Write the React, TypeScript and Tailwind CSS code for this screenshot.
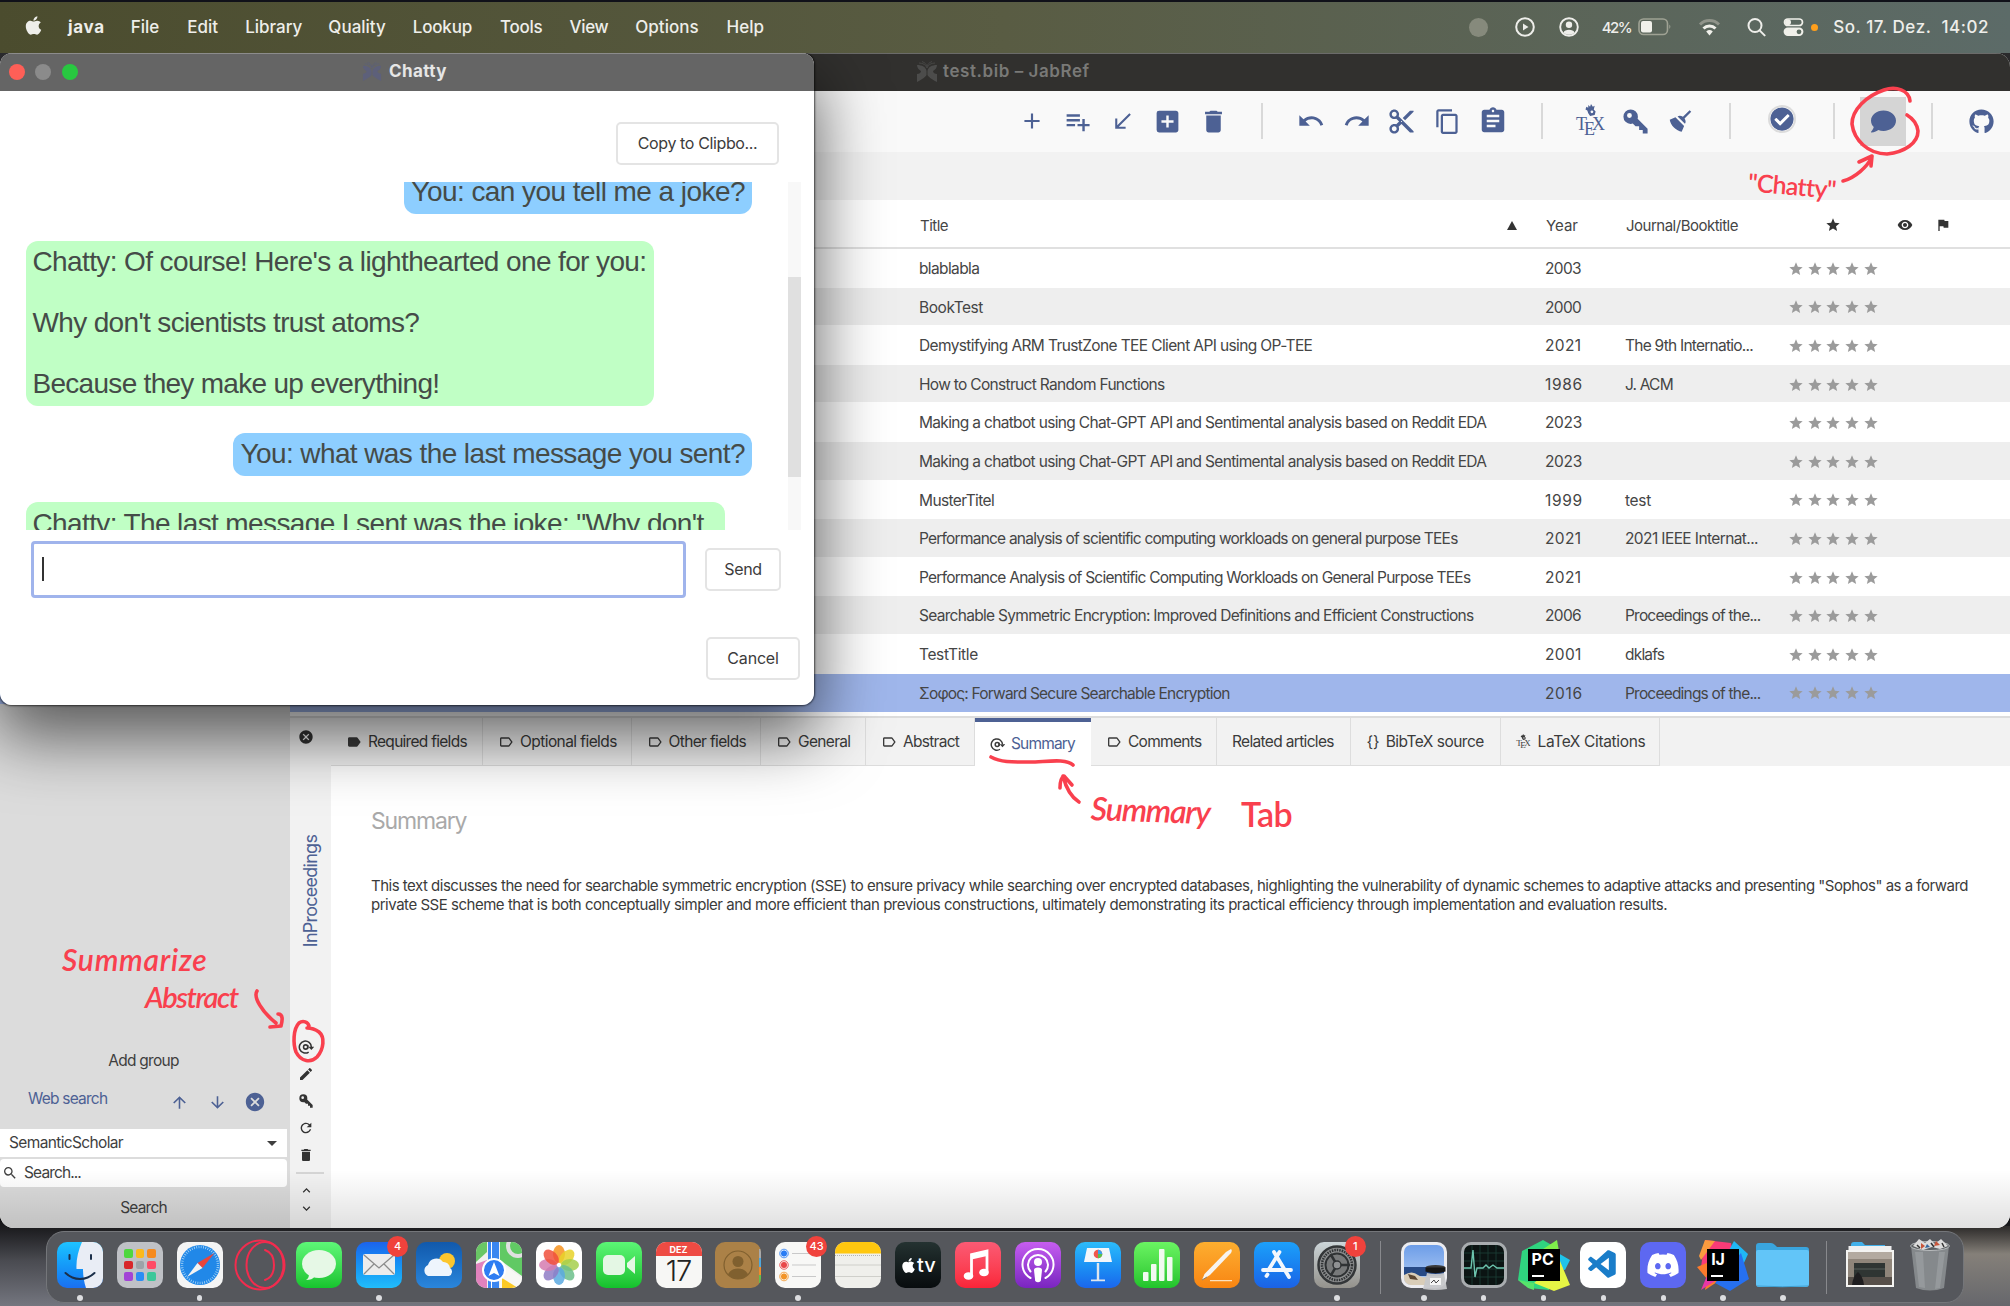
import React, { useLayoutEffect, useRef, useState } from "react";
import {
  MdAdd, MdPlaylistAdd, MdSouthWest, MdAddBox, MdDelete, MdUndo, MdRedo, MdContentCut, MdContentCopy,
  MdAssignment, MdLabel, MdLabelOutline, MdStar, MdRemoveRedEye, MdFlag, MdEdit, MdRefresh, MdExpandLess,
  MdExpandMore, MdArrowUpward, MdArrowDownward, MdCancel, MdSearch, MdArrowDropDown,
} from "react-icons/md";
import { FaApple, FaComment, FaDiscord, FaGithub, FaCheckCircle } from "react-icons/fa";
import { VscVscode } from "react-icons/vsc";

/** Text tracked so that it takes exactly `w` pixels. */
function Fit({ w, children, className = "" }: { w: number; children: string; className?: string }) {
  const ref = useRef<HTMLSpanElement>(null);
  const [spacing, setSpacing] = useState(0);
  useLayoutEffect(() => {
    if (ref.current) setSpacing((w - ref.current.offsetWidth) / Math.max(1, children.length - 1));
  }, [w, children]);
  return (
    <span ref={ref} className={`inline-block whitespace-pre shrink-0 ${className}`} style={{ letterSpacing: spacing }}>
      {children}
    </span>
  );
}

/* ---------- small icons ---------- */

const KeyIcon = ({ size }: { size: number }) => (
  <svg width={size} height={size} viewBox="0 0 24 24" fill="currentColor">
    <path d="M22,18V22H18V19H15V16H12L9.74,13.74C9.19,13.91 8.61,14 8,14A6,6 0 0,1 2,8A6,6 0 0,1 8,2A6,6 0 0,1 14,8C14,8.61 13.91,9.19 13.74,9.74L22,18M7,5A2,2 0 0,0 5,7A2,2 0 0,0 7,9A2,2 0 0,0 9,7A2,2 0 0,0 7,5Z" />
  </svg>
);
const BroomIcon = ({ size }: { size: number }) => (
  <svg width={size} height={size} viewBox="0 0 24 24" fill="currentColor">
    <path d="M19.36,2.72L20.78,4.14L15.06,9.85C16.13,11.39 16.28,13.24 15.38,14.44L9.06,8.12C10.26,7.22 12.11,7.37 13.65,8.44L19.36,2.72M5.93,17.57C3.92,15.56 2.69,13.16 2.35,10.92L7.23,8.83L14.67,16.27L12.58,21.15C10.34,20.81 7.94,19.58 5.93,17.57Z" />
  </svg>
);
const AtIcon = ({ size }: { size: number }) => (
  <svg width={size} height={size} viewBox="0 0 24 24" fill="none" stroke="currentColor" strokeWidth="2.3">
    <path d="M16 19.6A9 9 0 1 1 20 12" />
    <path d="M15.5 11.5h9l-4.5 5z" fill="currentColor" stroke="none" />
    <circle cx="11.5" cy="12" r="3.2" />
    <path d="M14.5 9v5.5" />
  </svg>
);
const TexIcon = ({ small = false }: { small?: boolean }) => (
  <span className={`relative flex flex-col items-center font-['Liberation_Serif'] leading-none ${small ? "w-[16px] h-[16px]" : "w-[29px] h-[34px]"}`}>
    <svg className={small ? "w-[7px] h-[7px]" : "w-[12px] h-[13px]"} viewBox="0 0 12 13" fill="currentColor">
      <path d="M1 3l2 1 0-3 2 2 1-3 2 3 2-1-1 4 2 2-1 4-5 1-2-3-1-3-2-1z" />
      <circle cx="7" cy="8.5" r="1.5" fill="#f9f9f9" />
    </svg>
    <span className={`flex leading-none ${small ? "text-[9px] -mt-px" : "text-[18px] -mt-[1px]"}`}>
      <span>T</span>
      <span className={small ? "-ml-[1.5px] mt-[2px]" : "-ml-[3px] mt-[5px]"}>E</span>
      <span className={small ? "-ml-[1.5px]" : "-ml-[3px]"}>X</span>
    </span>
  </span>
);
const JabRefIcon = ({ className }: { className: string }) => (
  <svg className={className} viewBox="0 0 22 22" fill="currentColor">
    <path d="M1 4c5 0 9 2 9.500 6v4c-1 2-4 4-9.500 7V13c2 0 4-1 4-3C3 9 1 7 1 4zM21 4c-5 0-9 2-9.500 6v4c1 2 4 4 9.500 7V13c-2 0-4-1-4-3 2-1 4-3 4-6z" />
    <path d="M3 2c4 0 7 2 8 5 1-3 4-5 8-5M6 .5c3 1 4.500 3 5 5 .5-2 2-4 5-5" fill="none" stroke="currentColor" strokeWidth=".8" />
  </svg>
);

/* ---------- menu bar ---------- */

const MENUS: [string, number, string][] = [
  ["java", 36, "ml-[68px] font-bold"], ["File", 29, "ml-[26px]"], ["Edit", 31, "ml-[28px]"],
  ["Library", 57, "ml-[27px]"], ["Quality", 57, "ml-[26px]"], ["Lookup", 59, "ml-[27px]"],
  ["Tools", 43, "ml-[28px]"], ["View", 39, "ml-[27px]"], ["Options", 63, "ml-[27px]"], ["Help", 37, "ml-[28px]"],
];

function MenuBar() {
  return (
    <div className="relative flex h-[53px] shrink-0 items-center border-t-2 border-[#101119] bg-linear-to-r from-[#4b4c2e] via-[#595c43] to-[#5c6b68] pb-[1px] text-[17px] font-medium text-[#eeeeea]">
      <FaApple size={21} className="absolute left-[22.500px] top-[13px]" />
      {MENUS.map(([t, w, c]) => (
        <Fit key={t} w={w} className={c}>{t}</Fit>
      ))}
      <div className="ml-auto flex items-center">
        <span className="size-[19px] rounded-full bg-[#868a7c]" />
        <svg className="ml-[27px]" width="20" height="20" viewBox="0 0 20 20" fill="none" stroke="currentColor" strokeWidth="2">
          <circle cx="10" cy="10" r="8.800" /><path d="M8 6.500l5.500 3.500-5.500 3.500z" fill="currentColor" stroke="none" />
        </svg>
        <svg className="ml-[24px]" width="20" height="20" viewBox="0 0 20 20" fill="none" stroke="currentColor" strokeWidth="1.900">
          <circle cx="10" cy="10" r="8.800" /><circle cx="10" cy="7.800" r="3.200" fill="currentColor" stroke="none" />
          <path d="M4.500 15.500c1-3.800 10-3.800 11 0-3 3-8 3-11 0z" fill="currentColor" stroke="none" />
        </svg>
        <Fit w={31} className="ml-[23px] text-[15px]">42%</Fit>
        <svg className="ml-[7px]" width="34" height="18" viewBox="0 0 34 18">
          <rect x="1" y="1" width="28.500" height="15.500" rx="4.500" fill="none" stroke="#9fa294" strokeWidth="1.600" />
          <rect x="3" y="3" width="11" height="11.500" rx="2" fill="#f0f0ea" />
          <path d="M31.300 6.500q2.200 2.200 0 4.500z" fill="#9fa294" />
        </svg>
        <svg className="ml-[26px]" width="23" height="18" viewBox="0 0 22 18" fill="none" strokeWidth="3">
          <path d="M1.500 6.500a13.500 13.500 0 0 1 19 0" stroke="#90948a" />
          <path d="M5 10.500a8.500 8.500 0 0 1 12 0" stroke="#f0f0ea" />
          <path d="M11 17.500l-3.300-4a5 5 0 0 1 6.600 0z" fill="#f0f0ea" />
        </svg>
        <svg className="ml-[26px]" width="19" height="20" viewBox="0 0 19 20" fill="none" stroke="currentColor" strokeWidth="2">
          <circle cx="8" cy="8.500" r="6.500" /><path d="M12.600 13.400l5 5" strokeLinecap="round" />
        </svg>
        <svg className="ml-[17px]" width="21" height="20" viewBox="0 0 21 20">
          <rect x="1.500" y="2" width="18" height="6.500" rx="3.300" fill="none" stroke="#f0f0ea" strokeWidth="1.700" />
          <circle cx="5" cy="5.200" r="3" fill="#f0f0ea" />
          <rect x="0.600" y="10.500" width="19.800" height="8.500" rx="4.200" fill="#f0f0ea" />
          <circle cx="16" cy="14.800" r="2.400" fill="#5c6b60" />
        </svg>
        <span className="ml-[7px] size-[7px] rounded-full bg-[#ff9f1c]" />
        <Fit w={155} className="ml-[15px] mr-[21px]">{"So. 17. Dez.  14:02"}</Fit>
      </div>
    </div>
  );
}

/* ---------- toolbar ---------- */

const Cell = ({ children, className = "" }: { children: React.ReactNode; className?: string }) => (
  <div className={`flex w-[45.400px] h-full items-center justify-center ${className}`}>{children}</div>
);
const Separator = () => (
  <div className="flex w-[52.500px] items-center justify-center"><span className="h-[36px] w-[2px] bg-[#d9d9d9]" /></div>
);

function Toolbar() {
  return (
    <div className="flex h-[61px] items-center bg-[#f9f9f9] pb-[1px] pl-[1009px] text-[#4d6194]">
      <Cell><MdAdd size={26} /></Cell>
      <Cell><MdPlaylistAdd size={29} /></Cell>
      <Cell><MdSouthWest size={25} /></Cell>
      <Cell><MdAddBox size={29} /></Cell>
      <Cell><MdDelete size={29} /></Cell>
      <Separator />
      <Cell><MdUndo size={28} /></Cell>
      <Cell><MdRedo size={28} /></Cell>
      <Cell><MdContentCut size={29} /></Cell>
      <Cell><MdContentCopy size={27} /></Cell>
      <Cell><MdAssignment size={30} /></Cell>
      <Separator />
      <Cell><TexIcon /></Cell>
      <Cell><KeyIcon size={29} /></Cell>
      <Cell><BroomIcon size={28} /></Cell>
      <Separator />
      <div className="mb-[5px] flex w-[51px] justify-center">
        <span className="rounded-full bg-[#dcdcdc] p-[2px]"><FaCheckCircle size={24} className="rounded-full bg-white" /></span>
      </div>
      <Separator />
      <div className="flex h-[49px] w-[46px] items-center justify-center bg-[#d5d5d5]"><FaComment size={25} /></div>
      <Separator />
      <Cell><FaGithub size={25} /></Cell>
    </div>
  );
}

/* ---------- table ---------- */

const ROWS: [string, number, string, string, number][] = [
  ["blablabla", 61, "2003", "", 0],
  ["BookTest", 64, "2000", "", 0],
  ["Demystifying ARM TrustZone TEE Client API using OP-TEE", 394, "2021", "The 9th Internatio...", 129],
  ["How to Construct Random Functions", 246, "1986", "J. ACM", 49],
  ["Making a chatbot using Chat-GPT API and Sentimental analysis based on Reddit EDA", 568, "2023", "", 0],
  ["Making a chatbot using Chat-GPT API and Sentimental analysis based on Reddit EDA", 568, "2023", "", 0],
  ["MusterTitel", 76, "1999", "test", 26],
  ["Performance analysis of scientific computing workloads on general purpose TEEs", 539, "2021", "2021 IEEE Internat...", 134],
  ["Performance Analysis of Scientific Computing Workloads on General Purpose TEEs", 552, "2021", "", 0],
  ["Searchable Symmetric Encryption: Improved Definitions and Efficient Constructions", 555, "2006", "Proceedings of the...", 136],
  ["TestTitle", 59, "2001", "dklafs", 40],
  ["Σοφος: Forward Secure Searchable Encryption", 311, "2016", "Proceedings of the...", 136],
];

function Table() {
  return (
    <div className="bg-white text-[15.500px] text-[#454545]">
      <div className="flex h-[49px] items-center border-b-2 border-[#e0e0e0] pl-[920px] pt-[3px] text-[15px]">
        <div className="w-[587px]"><Fit w={29}>Title</Fit></div>
        <svg width="10" height="9" viewBox="0 0 10 9" className="shrink-0 text-[#333]"><path d="M5 0l5 9H0z" fill="currentColor" /></svg>
        <Fit w={32} className="ml-[29px]">Year</Fit>
        <Fit w={113} className="ml-[48px]">Journal/Booktitle</Fit>
        <MdStar size={16} className="ml-[87px] text-[#333]" />
        <MdRemoveRedEye size={16} className="ml-[56px] text-[#333]" />
        <MdFlag size={16} className="ml-[22px] text-[#333]" />
      </div>
      {ROWS.map(([title, tw, year, journal, jw], i) => (
        <div
          key={i}
          className={`flex h-[38.600px] items-center pl-[919px] ${i === 11 ? "bg-[#9fb6eb] pt-[1px]" : i % 2 ? "border-b-[1px] border-white bg-[#eeeeee] pt-[2px]" : "bg-white pt-[1px]"}`}
        >
          <div className="w-[626px]"><Fit w={tw}>{title}</Fit></div>
          <div className="w-[80px]"><Fit w={year === "2021" || year === "2001" ? 36 : 37}>{year}</Fit></div>
          <div className="w-[163px]">{journal && <Fit w={jw}>{journal}</Fit>}</div>
          <div className="flex gap-[2.700px] text-[#9b9b9b]">
            {[0, 1, 2, 3, 4].map((s) => <MdStar key={s} size={16} />)}
          </div>
        </div>
      ))}
    </div>
  );
}

/* ---------- lower part ---------- */

function SidePane() {
  return (
    <div className="flex w-[290px] shrink-0 flex-col bg-[#dcdcdc] text-[15.500px] text-[#3f3f3f]">
      <div className="mt-[338px] flex h-[37px] items-center justify-center pr-[3px]"><Fit w={71}>Add group</Fit></div>
      <div className="mt-[1px] flex h-[46px] items-center pl-[28px] text-[#4d6194]">
        <Fit w={80} className="mb-[8px] mr-[63px]">Web search</Fit>
        <MdArrowUpward size={19} />
        <MdArrowDownward size={19} className="ml-[19px]" />
        <MdCancel size={22} className="ml-[17px]" />
      </div>
      <div className="mr-[3px] mt-[4px] flex h-[28px] items-center justify-between bg-white pl-[9px] pr-[3px]">
        <Fit w={115}>SemanticScholar</Fit>
        <MdArrowDropDown size={24} />
      </div>
      <div className="mr-[3px] mt-[2.500px] flex h-[28px] items-center rounded-sm bg-white pl-[2px]">
        <MdSearch size={16} />
        <Fit w={58} className="ml-[6px]">Search...</Fit>
      </div>
      <div className="flex h-[42px] items-center justify-center pr-[3px]"><Fit w={47}>Search</Fit></div>
    </div>
  );
}

function EntryRail() {
  return (
    <div className="flex w-[41px] shrink-0 flex-col items-center bg-[#f2f2f2] pr-[9px] text-[#333]">
      <MdCancel size={16} className="mt-[10.500px]" />
      <div className="ml-[10px] mt-[89px] flex h-[114px] w-[20px] items-center justify-center text-[18px] text-[#4d6194]">
        <span className="-rotate-90"><Fit w={113}>InProceedings</Fit></span>
      </div>
      <div className="mt-[91px] flex flex-col items-center gap-[11.200px]">
        <AtIcon size={16} />
        <MdEdit size={16} />
        <KeyIcon size={16} />
        <MdRefresh size={16} />
        <MdDelete size={16} />
      </div>
      <div className="ml-[8px] mt-[9px] h-[2px] w-[28px] shrink-0 bg-[#d5d5d5]" />
      <MdExpandLess size={15} className="mt-[9px]" />
      <MdExpandMore size={15} className="mt-[3px]" />
    </div>
  );
}

const Lbl = () => <MdLabelOutline size={16} className="shrink-0" />;
const TABS: [string, number, string, React.ReactNode][] = [
  ["Required fields", 100, "w-[152px] pl-[15px]", <MdLabel size={16} className="shrink-0" />],
  ["Optional fields", 97, "w-[148.500px] pl-[15px]", <Lbl />],
  ["Other fields", 78, "w-[129.500px] pl-[15px]", <Lbl />],
  ["General", 53, "w-[105px] pl-[15px]", <Lbl />],
  ["Abstract", 57, "w-[109px] pl-[15px]", <Lbl />],
  ["Summary", 65, "w-[116px] pl-[15px]", <AtIcon size={15} />],
  ["Comments", 74, "w-[126px] pl-[15px]", <Lbl />],
  ["Related articles", 102, "w-[133.500px] pl-[15px]", null],
  ["BibTeX source", 99, "w-[150px] pl-[16px]", <Fit w={13}>{"{}"}</Fit>],
  ["LaTeX Citations", 108, "w-[159px] pl-[15px]", <TexIcon small />],
];

function Editor() {
  return (
    <div className="flex min-w-0 flex-1 flex-col bg-white text-[#3b3b3b]">
      <div className="flex h-[48px] bg-[#f2f2f2] text-[15.500px]">
        {TABS.map(([t, w, c, icon]) => (
          <div
            key={t}
            className={`flex shrink-0 items-center gap-[6px] ${c} ${t === "Summary" ? "border-t-4 border-[#4d6194] bg-white" : "border-b border-r border-[#dddddd] pt-[1px]"}`}
          >
            {icon}
            <Fit w={w} className={t === "Summary" ? "text-[#4d6194]" : ""}>{t}</Fit>
          </div>
        ))}
      </div>
      <Fit w={97} className="ml-[40px] mt-[41px] self-start text-[23px] leading-[28px] text-[#a9a9a9]">Summary</Fit>
      <div className="ml-[40px] mt-[42px] flex flex-col text-[15px] leading-[18.700px]">
        <Fit w={1598} className="self-start">{"This text discusses the need for searchable symmetric encryption (SSE) to ensure privacy while searching over encrypted databases, highlighting the vulnerability of dynamic schemes to adaptive attacks and presenting \"Sophos\" as a forward"}</Fit>
        <Fit w={1297} className="self-start">private SSE scheme that is both conceptually simpler and more efficient than previous constructions, ultimately demonstrating its practical efficiency through implementation and evaluation results.</Fit>
      </div>
    </div>
  );
}

/* ---------- chat dialog ---------- */

const Btn = ({ w, className, children }: { w: number; className: string; children: string }) => (
  <button className={`flex h-[43px] shrink-0 items-center justify-center rounded-[5px] border-2 border-[#e4e4e4] bg-white text-[16px] text-[#3c3c3c] ${className}`}>
    <Fit w={w}>{children}</Fit>
  </button>
);

function ChatDialog() {
  return (
    <div className="absolute left-0 top-[53px] flex h-[652px] w-[814px] flex-col overflow-hidden rounded-[12px] bg-white">
      <div className="relative flex h-[38px] shrink-0 items-center border-t border-[#8c8c8c] bg-[#656565] pb-[2px] pl-[9px]">
        <span className="size-[16px] rounded-full bg-[#ff5f57]" />
        <span className="ml-[10px] size-[16px] rounded-full bg-[#8b8b8b]" />
        <span className="ml-[11px] size-[16px] rounded-full bg-[#28c840]" />
        <JabRefIcon className="ml-[284px] size-[20px] text-[#5d607a]" />
        <Fit w={58} className="ml-[7px] text-[17px] font-bold text-[#e6e6e6]">Chatty</Fit>
      </div>
      <Btn w={120} className="ml-[616px] mt-[30.500px] w-[163px]">Copy to Clipbo...</Btn>
      <div className="mt-[17.500px] flex h-[348px] shrink-0">
        <div className="flex w-[788px] flex-col gap-[26.500px] overflow-hidden pl-[26px] pr-[36px] font-['Liberation_Sans'] text-[28px] leading-[30.600px] text-[#454b48]">
          <div className="-mt-[12px] flex self-end rounded-[12px] bg-[#8dceff] px-[7px] pb-[7px] pt-[6.500px]"><Fit w={334}>You: can you tell me a joke?</Fit></div>
          <div className="flex w-[628px] flex-col rounded-[12px] bg-[#c0ffc5] px-[6.500px] pb-[6px] pt-[6.500px]">
            <Fit w={615} className="mb-[30.600px] self-start">Chatty: Of course! Here's a lighthearted one for you:</Fit>
            <Fit w={387} className="mb-[30.600px] self-start">Why don't scientists trust atoms?</Fit>
            <Fit w={408} className="self-start">Because they make up everything!</Fit>
          </div>
          <div className="flex self-end rounded-[12px] bg-[#8dceff] px-[7px] py-[6.300px]"><Fit w={505}>You: what was the last message you sent?</Fit></div>
          <div className="flex w-[699px] rounded-[12px] bg-[#c0ffc5] px-[6.500px] py-[6.500px]"><Fit w={672}>Chatty: The last message I sent was the joke: "Why don't</Fit></div>
        </div>
        <div className="w-[13px] bg-[#f8f8f8] pt-[95px]"><div className="h-[200px] bg-[#e0e0e0]" /></div>
      </div>
      <div className="mt-[10.500px] flex shrink-0 items-center">
        <div className="ml-[31px] flex h-[57px] w-[655px] items-center rounded-[4px] border-[3px] border-[#a0b4ec] pl-[8px]">
          <span className="h-[24px] w-[1.500px] bg-[#333]" />
        </div>
        <Btn w={38} className="ml-[19px] w-[76px]">Send</Btn>
      </div>
      <Btn w={51} className="ml-[706px] mt-[39px] w-[94px]">Cancel</Btn>
    </div>
  );
}

/* ---------- red pen annotations ---------- */

function Annotations() {
  return (
    <div className="pointer-events-none absolute inset-0 text-[#f9404e]">
      <svg className="absolute inset-0" width="2010" height="1306" fill="none" stroke="currentColor" strokeWidth="3.600" strokeLinecap="round" strokeLinejoin="round">
        <path d="M1910 101C1909 90 1896 86 1884 90C1866 96 1852 110 1852 124C1854 140 1868 154 1887 154C1905 152 1918 143 1918 131C1917 124 1912 118 1907 115" />
        <path d="M1843 181C1855 178 1867 167 1872 157M1859 162L1872 156L1871 166" />
        <path d="M991 757C1002 763 1016 762 1030 762C1045 762 1066 758 1073 765" />
        <path d="M1079 802C1071 797 1066 788 1063 776M1060 788C1060 781 1062 777 1064 776L1072 785" />
        <path d="M257 991C253 997 262 1012 276 1023M278 1014C284 1014 282 1022 281 1026L270 1027" />
        <path d="M309 1026C308 1022 303 1020 299 1023C293 1029 293 1044 296 1052C301 1062 311 1063 317 1057C324 1049 325 1037 319 1032C315 1029 311 1028 307 1028" />
      </svg>
      <span className="absolute left-[1748px] top-[170px] rotate-[5deg] font-['Lato'] text-[25px] font-semibold leading-[30px]"><Fit w={88}>"Chatty"</Fit></span>
      <span className="absolute left-[1091px] top-[791px] rotate-[2deg] font-['Lato'] text-[32px] font-semibold italic leading-[38px]"><Fit w={120}>Summary</Fit></span>
      <span className="absolute left-[1241px] top-[793px] font-['Lato'] text-[34px] font-semibold leading-[42px]"><Fit w={52}>Tab</Fit></span>
      <span className="absolute left-[62px] top-[941px] font-['Lato'] text-[30px] font-semibold italic leading-[36px]"><Fit w={145}>Summarize</Fit></span>
      <span className="absolute left-[145px] top-[979px] font-['Lato'] text-[29px] font-semibold italic leading-[36px]"><Fit w={94}>Abstract</Fit></span>
    </div>
  );
}

/* ---------- dock ---------- */

const Tile = ({ className = "", children }: { className?: string; children?: React.ReactNode }) => (
  <span className={`relative flex size-[46px] items-center justify-center overflow-hidden rounded-[10px] ${className}`}>{children}</span>
);
const Svg = ({ children }: { children: React.ReactNode }) => (
  <svg className="absolute inset-0" width="46" height="46" viewBox="0 0 46 46">{children}</svg>
);

const PETALS = ["#f7931e", "#e8d22a", "#a5cf4c", "#6cc08b", "#5aa9e0", "#8f7cc6", "#d57bb0", "#f0503c"];
const PADS = ["#4fd73f", "#fbb91c", "#f68a1e", "#d8262a", "#9da3a8", "#ff4b66", "#a243d6", "#2b8df5", "#3cc79a"];

const JetBrains = ({ label, children }: { label: string; children: React.ReactNode }) => (
  <span className="relative flex size-[52px] items-center justify-center">
    <svg className="absolute inset-0" viewBox="0 0 52 52">{children}</svg>
    <span className="relative flex size-[32px] flex-col justify-between bg-black p-[4px] text-white">
      <span className="text-[16px] font-bold leading-[13px]">{label}</span>
      <span className="h-[2px] w-[12px] bg-white" />
    </span>
  </span>
);

const Finder = () => (
  <Tile className="bg-linear-to-b from-[#1fc3ff] to-[#1b6ff0]">
    <Svg>
      <path d="M25 0C21 9 19 18 19.500 27H26C26 34 27 40 29 46H46V0z" fill="#e9edf5" />
      <path d="M12.500 13v4M34 13v4M8.500 31C17 39 29 39 37.500 31" stroke="#1b2f4a" strokeWidth="2" fill="none" strokeLinecap="round" />
    </Svg>
  </Tile>
);
const Launchpad = () => (
  <Tile className="bg-[#bfc1c6]">
    <div className="grid grid-cols-3 gap-[3px]">{PADS.map((c) => <span key={c} className="size-[8.500px] rounded-[2px]" style={{ backgroundColor: c }} />)}</div>
  </Tile>
);
const Safari = () => (
  <Tile className="bg-[#f4f4f4]">
    <Svg>
      <circle cx="23" cy="23" r="20" fill="#2188e8" />
      <circle cx="23" cy="23" r="18" fill="none" stroke="#a6d4f7" strokeWidth="2.500" strokeDasharray="0.800 1.500" />
      <path d="M37.500 11L25.500 26 20.500 21z" fill="#e8453c" /><path d="M10 35L20.500 21 25.500 26z" fill="#f3f3f3" />
    </Svg>
  </Tile>
);
const Opera = () => (
  <svg width="52" height="52" viewBox="0 0 52 52" fill="none" stroke="#f22c4e" strokeWidth="2">
    <circle cx="26" cy="26" r="24.500" /><ellipse cx="31" cy="26" rx="18.500" ry="23" />
    <path d="M31 11c6 2 9 8 9 15s-3 13-9 15" strokeLinecap="round" />
  </svg>
);
const Messages = () => (
  <Tile className="bg-linear-to-b from-[#5df777] to-[#14c42d]">
    <Svg><ellipse cx="23" cy="22" rx="17" ry="14" fill="#e6f8e6" /><path d="M13 32c0 3-1 5-3 6 4 0 7-1 9-4z" fill="#e6f8e6" /></Svg>
  </Tile>
);
const Mail = () => (
  <Tile className="bg-linear-to-b from-[#1d63ec] to-[#22bdfb]">
    <Svg><rect x="7" y="12" width="32" height="21" rx="2" fill="#ececec" /><path d="M8 13l15 13 15-13M8 32l10-10M38 32L28 22" fill="none" stroke="#8b8b8b" strokeWidth="1.300" /></Svg>
  </Tile>
);
const Weather = () => (
  <Tile className="bg-linear-to-b from-[#1159ac] to-[#2a86dc]">
    <Svg><circle cx="31" cy="19" r="8" fill="#fcc62d" /><path d="M12 34a6 6 0 0 1 0-11 8.500 8.500 0 0 1 15-3 6.500 6.500 0 0 1 7 6 4.500 4.500 0 0 1-1 8z" fill="#eef5fd" /></Svg>
  </Tile>
);
const Maps = () => (
  <Tile className="bg-[#f1f1ee]">
    <Svg>
      <path d="M0 0h11v10L0 20z" fill="#69c765" /><path d="M12 0h11v46H12z" fill="#3a86f0" /><path d="M15 0h1v46h-1z" fill="#fff" />
      <path d="M24 0h22v34L24 18z" fill="#61c964" /><path d="M0 22L11 18v28H0z" fill="#e182bd" /><path d="M24 20L46 36v10H24z" fill="#f8f8f5" />
      <path d="M26 46V36l16 10z" fill="#fbc925" /><circle cx="42" cy="4" r="10" fill="none" stroke="#e0e0e0" strokeWidth="4" />
      <circle cx="18" cy="28" r="11" fill="#2f7df2" stroke="#fff" strokeWidth="2" /><path d="M18 20l5.500 14-5.500-3-5.500 3z" fill="#fff" />
    </Svg>
  </Tile>
);
const Photos = () => (
  <Tile className="bg-white">
    <Svg>{PETALS.map((c, i) => <ellipse key={c} cx="23" cy="12" rx="6" ry="9" fill={c} opacity="0.850" transform={`rotate(${i * 45} 23 23)`} />)}</Svg>
  </Tile>
);
const FaceTime = () => (
  <Tile className="bg-linear-to-b from-[#5bf675] to-[#12c12b]">
    <Svg><rect x="7" y="13" width="22" height="20" rx="5" fill="#e4f7e4" /><path d="M31 21l8-7v18l-8-7z" fill="#e4f7e4" /></Svg>
  </Tile>
);
const Calendar = () => (
  <Tile className="flex-col !justify-start bg-[#f7f7f5]">
    <span className="flex h-[14px] w-full items-center justify-center bg-[#ee4b43] text-[9px] font-bold text-white">DEZ</span>
    <span className="text-[29px] font-light leading-[30px] tracking-[-1px] text-[#222]">17</span>
  </Tile>
);
const Contacts = () => (
  <Tile className="bg-[#ab8147]">
    <Svg>
      <circle cx="23" cy="23" r="14" fill="none" stroke="#80602f" strokeWidth="1.200" /><circle cx="23" cy="19.500" r="5.500" fill="#80602f" />
      <path d="M13 32.500c3-8 17-8 20 0-5 6-15 6-20 0z" fill="#80602f" />
      <path d="M44 7h2v9h-2z" fill="#a9a9a9" /><path d="M44 16h2v9h-2z" fill="#4fa8dd" /><path d="M44 25h2v8h-2z" fill="#ee8b2c" /><path d="M44 33h2v8h-2z" fill="#62bd4e" />
    </Svg>
  </Tile>
);
const Reminders = () => (
  <Tile className="bg-[#f8f8f6]">
    <Svg>
      {[["#2a7df4", 11.5], ["#e8484a", 23], ["#f29427", 34.5]].map(([c, y]) => (
        <g key={c as string}>
          <circle cx="9" cy={y} r="3.600" fill={c as string} stroke="#fff" strokeWidth="0.800" /><circle cx="9" cy={y} r="4.300" fill="none" stroke={c as string} strokeWidth="0.800" />
          <path d={`M17 ${y}h24`} stroke="#c9c9c9" />
        </g>
      ))}
    </Svg>
  </Tile>
);
const Notes = () => (
  <Tile className="bg-[#efefeb]">
    <Svg><path d="M0 0h46v11.500H0z" fill="#ffc70f" /><path d="M0 13.500h46" stroke="#b5b5b0" strokeDasharray="1 1" /><path d="M0 23h46M0 34.500h46" stroke="#cfcfca" /></Svg>
  </Tile>
);
const AppleTv = () => (
  <Tile className="bg-linear-to-b from-[#243231] to-[#080c0e] text-white">
    <FaApple size={17} /><span className="text-[20px] font-medium leading-none">tv</span>
  </Tile>
);
const Music = () => (
  <Tile className="bg-linear-to-b from-[#fb5a74] to-[#fa2338]">
    <Svg><path d="M16.500 33.500V12.500L32 9v21" fill="none" stroke="#fff" strokeWidth="2.800" /><path d="M16.500 12l15.500-3v5L16.500 17.500z" fill="#fff" /><ellipse cx="13.500" cy="34" rx="4.800" ry="3.800" fill="#fff" /><ellipse cx="29" cy="30.500" rx="4.800" ry="3.800" fill="#fff" /></Svg>
  </Tile>
);
const Podcasts = () => (
  <Tile className="bg-linear-to-b from-[#c65df0] to-[#7a24c0]">
    <Svg>
      <g fill="none" stroke="#fff" strokeWidth="2" strokeLinecap="round"><path d="M15.500 36a15.500 15.500 0 1 1 15 0" /><path d="M15.500 29.500a10 10 0 1 1 15 0" /></g>
      <circle cx="23" cy="20" r="4" fill="#fff" /><path d="M19 28q0-2.500 4-2.500t4 2.500l-1.200 11q-2.800 2.500-5.600 0z" fill="#fff" />
    </Svg>
  </Tile>
);
const Keynote = () => (
  <Tile className="bg-linear-to-b from-[#2dbcfb] to-[#1c66ec]">
    <Svg><path d="M12 6h22l3 14H9z" fill="#f3f6fa" /><circle cx="23" cy="12" r="4.300" fill="#f0574c" /><path d="M23 12V7.700a4.300 4.300 0 0 1 4.300 4.300z" fill="#3aa1ee" /><path d="M23 12h4.300a4.300 4.300 0 0 1-4.300 4.300z" fill="#58c14b" /><path d="M21.800 21h2.400v16.500h-2.400zM16 37.500h14v1.800H16z" fill="#dfe6ee" /></Svg>
  </Tile>
);
const Numbers = () => (
  <Tile className="bg-linear-to-b from-[#6af462] to-[#1fc42b]">
    <Svg><g fill="#f1faf0"><rect x="9" y="30" width="5.500" height="9" rx="1" /><rect x="17" y="22" width="5.500" height="17" rx="1" /><rect x="25" y="7" width="5.500" height="32" rx="1" /><rect x="33" y="15" width="5.500" height="24" rx="1" /></g></Svg>
  </Tile>
);
const Pages = () => (
  <Tile className="bg-linear-to-b from-[#fdae2f] to-[#f88511]">
    <Svg><path d="M8 38l2.500-6L32 10l5-3c1 1 1 2 0 4L16 33z" fill="#f7f3ee" /><path d="M8 38l5-3" stroke="#8d8272" /><path d="M16 38.700h22" stroke="#fbe0bd" strokeWidth="1.300" /></Svg>
  </Tile>
);
const AppStore = () => (
  <Tile className="bg-linear-to-b from-[#1da0fa] to-[#1c62e6]">
    <Svg><path d="M25.500 10L14.500 28M20 10l15 25M9 28h28M12.500 34l1-1.500" stroke="#f3f7fd" strokeWidth="3.800" strokeLinecap="round" fill="none" /></Svg>
  </Tile>
);
const Settings = () => (
  <Tile className="bg-linear-to-b from-[#ccd5d9] to-[#94928c]">
    <Svg>
      <circle cx="23" cy="23" r="18.500" fill="#8b8d8e" stroke="#333638" strokeWidth="2.500" /><circle cx="23" cy="23" r="15" fill="none" stroke="#303335" strokeWidth="2.500" strokeDasharray="1.500 1" />
      <circle cx="23" cy="23" r="11.500" fill="#77797a" stroke="#2f3234" strokeWidth="2" /><path d="M23 23h13M23 23l-6.500-11M23 23l-6.500 11" stroke="#2f3234" strokeWidth="2.500" /><circle cx="23" cy="23" r="4" fill="#8f9193" stroke="#2f3234" strokeWidth="1.500" />
    </Svg>
  </Tile>
);
const Preview = () => (
  <span className="relative">
    <Tile className="border-[3px] border-[#ececf0] bg-linear-to-b from-[#6d9de8] to-[#b5cff4]">
      <svg className="absolute inset-0" viewBox="0 0 40 40"><path d="M0 22h40v9H0z" fill="#274a86" /><path d="M0 30q8-5 14 0t26 0v10H0z" fill="#d9cdb8" /><path d="M4 29l7 2 3 4-8-1z" fill="#5c4632" /></svg>
    </Tile>
    <svg className="absolute left-[20px] top-[22px]" width="28" height="27" viewBox="0 0 28 27"><ellipse cx="14.500" cy="3.500" rx="10" ry="2.500" fill="#3a3a3a" /><path d="M4.500 3.500h20v4q-10 3.500-20 0z" fill="#151515" /><path d="M6 9q8.500 2 17 0l3 16q-12 2-24 0z" fill="#c7c8ca" opacity="0.950" /><rect x="9" y="14" width="11" height="7" fill="#f4f4f4" /><path d="M10 19l3-3 2 3 3-3" stroke="#444" fill="none" /></svg>
  </span>
);
const Activity = () => (
  <Tile className="border-[3px] border-[#a9adb0] bg-[#0b1413]">
    <svg className="absolute inset-0" viewBox="0 0 40 40" fill="none"><path d="M0 8h40M0 16h40M0 24h40M0 32h40M8 0v40M16 0v40M24 0v40M32 0v40" stroke="#1d4039" strokeWidth="0.800" /><path d="M0 23h7l2-18 2 27 2-9h6l3-3 3 3 4-3 4 3h7" stroke="#6cc5ae" strokeWidth="1.400" /></svg>
  </Tile>
);
const PyCharm = () => (
  <JetBrains label="PC">
    <path d="M4 12L25 1l14 8-8 42-20-2L0 41z" fill="#2fd47f" /><path d="M22 12L39 1l3 17z" fill="#7ff04b" /><path d="M40 14l12 7-5 10-10-2z" fill="#1fc4ea" /><path d="M42 22l10 24-16 6-20-8z" fill="#e6f545" /><path d="M0 41l16 3 0 7-6-2z" fill="#56e36b" />
  </JetBrains>
);
const IntelliJ = () => (
  <JetBrains label="IJ">
    <path d="M8 1l26 3 4 20L4 28z" fill="#fb3b77" /><path d="M8 1l10 1L4 21l-2-4z" fill="#fc9b3f" /><path d="M0 28l12-5 8 20-12 8 2-11z" fill="#fc7a2c" /><path d="M4 51l14-9-6-10z" fill="#e737a6" /><path d="M37 2l14 13-9 20-12-20z" fill="#20b7f5" /><path d="M44 14l8 26-19 12-15-8z" fill="#2670f0" />
  </JetBrains>
);
const Folder = () => (
  <svg width="53" height="46" viewBox="0 0 53 46"><path d="M0 4q0-3 3-3h12q2 0 4 2l2 2h29q3 0 3 3v30H0z" fill="#3aa5de" /><path d="M0 10q0-2 2-2h49q2 0 2 2v32q0 3-3 3H3q-3 0-3-3z" fill="#62c5f8" /><path d="M1 44q25 1.500 51 0" stroke="#3f9fd0" fill="none" /></svg>
);
const Stack = () => (
  <svg width="50" height="48" viewBox="0 0 50 48"><path d="M6 4q0-3 3-3h8l3 3h20v8H6z" fill="#41b0ea" /><rect x="3.500" y="5" width="43" height="8" fill="#efefef" /><rect x="1" y="9" width="48" height="37" fill="#f4f4f2" /><rect x="3" y="11" width="44" height="33" fill="#8f857a" /><path d="M3 11h44v7H3z" fill="#b3aaa0" /><rect x="9" y="22" width="31" height="14" fill="#2f3533" /><path d="M9 28h31" stroke="#59605d" /><path d="M3 36h44v8H3z" fill="#57504a" /><path d="M7 44q1-9 6-13 5 4 6 13z" fill="#1f1e20" /></svg>
);
const Trash = () => (
  <svg width="42" height="54" viewBox="0 0 42 54"><path d="M2 8h38l-5 42q-14 5-28 0z" fill="#85898c" /><path d="M6 14h8l2 36-6-1zM30 14h6l-5 36-5 1z" fill="#a5a9ab" opacity="0.500" /><ellipse cx="21" cy="8" rx="19.500" ry="4.500" fill="#5b5f62" stroke="#b9bcbe" /><path d="M4 8l6-7 6 4 5-4 5 5 6-5 7 7-8 3-8-2-9 3z" fill="#dcdcdc" /><path d="M12 5l4 3-4 3zM27 3l4 4-6 1z" fill="#c8553a" /><path d="M18 6l3 3-5 1z" fill="#35679c" /><path d="M22 5l3 4M8 7l3 3M33 5l2 4" stroke="#333" strokeWidth="1.500" /></svg>
);

const APPS: [React.ReactNode, boolean?, string?][] = [
  [<Finder />, true], [<Launchpad />], [<Safari />, true], [<Opera />], [<Messages />], [<Mail />, true, "4"], [<Weather />], [<Maps />],
  [<Photos />], [<FaceTime />], [<Calendar />], [<Contacts />], [<Reminders />, true, "43"], [<Notes />], [<AppleTv />], [<Music />],
  [<Podcasts />], [<Keynote />], [<Numbers />], [<Pages />], [<AppStore />], [<Settings />, true, "1"],
];
const RUNNING: [React.ReactNode, boolean?, string?][] = [
  [<Preview />, true], [<Activity />, true], [<PyCharm />, true],
  [<Tile className="bg-white text-[#1a7dc9]"><VscVscode size={34} /></Tile>, true],
  [<Tile className="bg-[#5d68f1] text-white"><FaDiscord size={34} /></Tile>, true],
  [<IntelliJ />, true], [<Folder />, true],
];

function DockItem({ icon, dot, badge }: { icon: React.ReactNode; dot?: boolean; badge?: string }) {
  return (
    <div className="relative flex h-full w-[59.870px] shrink-0 flex-col items-center">
      <div className="mt-[5px] flex h-[56px] items-center">{icon}</div>
      {dot && <span className="mt-[2px] size-[5.500px] rounded-full bg-[#dcdde0]" />}
      {badge && (
        <span className="absolute right-[1px] top-[4px] flex size-[21px] items-center justify-center rounded-full bg-[#f0423c] text-[11px] font-medium text-white">{badge}</span>
      )}
    </div>
  );
}

function Dock() {
  return (
    <div className="absolute inset-x-0 bottom-0 flex h-[90px] items-end bg-linear-to-b from-[#0d0d0f] via-[#4a4b51] via-50% to-[#74767f] pb-[3px]">
      <div className="absolute bottom-0 right-0 h-[80px] w-[140px] bg-linear-to-b from-[#2c2a29] via-[#858079] via-35% to-[#66676c]" />
      <div className="relative ml-[46px] flex h-[72px] w-[1918px] rounded-[18px] border border-[#74767a] bg-[#55575c] pl-[3px]">
        {APPS.map(([icon, dot, badge], i) => <DockItem key={i} icon={icon} dot={dot} badge={badge} />)}
        <div className="flex w-[27px] justify-center pt-[9px]"><span className="h-[53px] w-[1.500px] bg-[#88898d]" /></div>
        {RUNNING.map(([icon, dot], i) => <DockItem key={i} icon={icon} dot={dot} />)}
        <div className="flex w-[27px] justify-center pt-[9px]"><span className="h-[53px] w-[1.500px] bg-[#88898d]" /></div>
        <DockItem icon={<Stack />} />
        <DockItem icon={<Trash />} />
      </div>
    </div>
  );
}

export default function App() {
  return (
    <div className="relative flex h-[1306px] w-[2010px] flex-col overflow-hidden bg-[#2a2a2c] font-['Inter','Noto_Sans',sans-serif] leading-none">
      <Dock />
      <MenuBar />
      <div className="relative flex h-[1175px] flex-col overflow-hidden rounded-[14px] bg-white">
        <div className="flex h-[38px] shrink-0 items-center border-t border-[#6b6b6a] bg-[#31302e] pb-[2px] pl-[916px] text-[#797977]">
          <JabRefIcon className="size-[22px] text-[#4c4c4b]" />
          <Fit w={146} className="ml-[5px] text-[17px] font-semibold">test.bib – JabRef</Fit>
        </div>
        <Toolbar />
        <div className="h-[48px] shrink-0 bg-[#f2f2f2]" />
        <Table />
        <div className="h-[6px] shrink-0 border-b-2 border-[#dcdcdc] bg-white" />
        <div className="relative -mt-[14px] flex min-h-0 flex-1">
          <SidePane />
          <div className="flex min-w-0 flex-1 pt-[14px]">
            <EntryRail />
            <Editor />
          </div>
        </div>
        <div className="absolute inset-x-0 bottom-0 h-[58px] bg-linear-to-b from-transparent to-black/12" />
        <div className="absolute left-0 top-0 h-[652px] w-[814px] rounded-[12px] shadow-[0_28px_66px_4px_rgba(0,0,0,0.600),0_0_2px_1px_rgba(0,0,0,0.600)]" />
      </div>
      <ChatDialog />
      <Annotations />
    </div>
  );
}
